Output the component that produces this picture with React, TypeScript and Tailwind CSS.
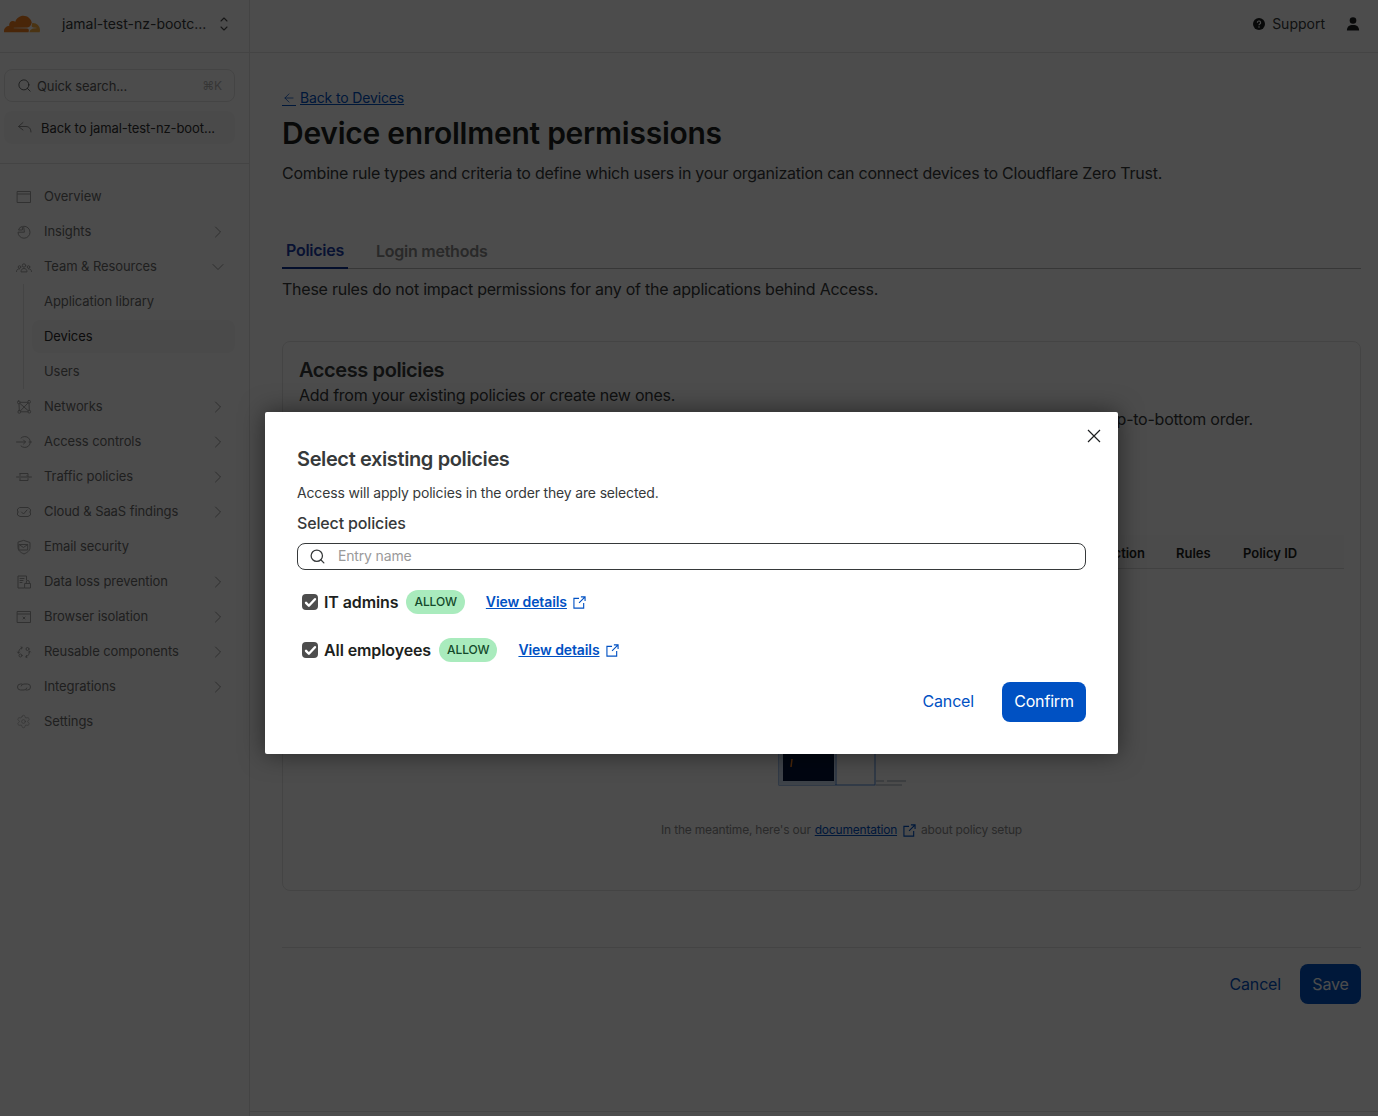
import React from "react";
import { ChevronRight, ChevronDown, Search, ArrowLeft, Settings } from "lucide-react";

const sw = { fill: "none", stroke: "currentColor", strokeWidth: 1, strokeLinecap: "round" as const, strokeLinejoin: "round" as const };
const I = ({ children }: { children: React.ReactNode }) => (
  <svg viewBox="0 0 16 16" width="16" height="16" {...sw}>{children}</svg>
);

const Ext = ({ size, className }: { size: number; className: string }) => (
  <svg viewBox="0 0 14 14" width={size} height={size} fill="none" stroke="currentColor" strokeWidth="1.200" className={className}>
    <path d="M6.500 2.500H1v10.500h10.500V7.500" />
    <path d="M8.500 1H13v4.500M13 1L6.500 7.500" />
  </svg>
);

const icons: Record<string, React.ReactNode> = {
  overview: <I><rect x="1.500" y="2.500" width="13" height="11" /><path d="M1.500 5h13" /></I>,
  insights: <I><path d="M8 2.200a6 6 0 1 1-6 6h6z" /><path d="M6 2.500a4.500 4.500 0 0 0-3.500 3.500H6z" /></I>,
  team: <I><circle cx="8" cy="6.500" r="1.700" /><circle cx="3.500" cy="8" r="1.300" /><circle cx="12.500" cy="8" r="1.300" /><path d="M5 12.500c0-2 1.300-3 3-3s3 1 3 3zM.5 12.500c0-1.600 1-2.700 3-2.700M15.500 12.500c0-1.600-1-2.700-3-2.700" /></I>,
  networks: <I><rect x="1.500" y="2" width="2.600" height="2.600" rx="1" /><rect x="11.800" y="1.500" width="2.600" height="2.600" rx="1" /><rect x="2" y="11.600" width="2.600" height="2.600" rx="1" /><rect x="12" y="11.400" width="2.600" height="2.600" rx="1" /><path d="M4 4.500l8 7M12 4L4.500 11.800M4 3.300h8M3 4.600l.3 7M13 4l.3 7.400M4.600 12.800h7.400" /></I>,
  access: <I><path d="M5 4a5.500 5.500 0 1 1 0 8" /><path d="M.5 8h9M7.500 6l2 2-2 2M13 8h2.500" /></I>,
  traffic: <I><path d="M4 4.500h8v2M4 11.500h8v-2M4 4.500v2M4 9.500v2M.5 8h15M11 6.500l1.500 1.500" /></I>,
  cloud: <I><path d="M4 3.500h8l2.500 2v2l-1 .5 1 .5v2.500l-2.500 1.500H4l-2.500-1.500V8.500l1-.5-1-.5v-2z" /><path d="M5.500 8l2 2 3.500-4" /></I>,
  email: <I><path d="M8 1.500l6 2v5c0 3-2.500 5-6 6.500-3.500-1.500-6-3.500-6-6.500v-5z" /><rect x="3.200" y="5.500" width="8.500" height="5.500" /><path d="M3.200 5.500l4.200 3 4.300-3" /></I>,
  dlp: <I><path d="M10.500 6V2H2v12h6" /><path d="M4 4.500h4M4 6.500h3M4 8.500h2" /><rect x="9" y="9.500" width="5.500" height="4.500" /><path d="M10.300 9.500V8a1.500 1.500 0 0 1 3 0v1.500" /></I>,
  browser: <I><rect x="1.500" y="2.500" width="13" height="11" /><path d="M1.500 5h13M7 8l2 2M9 8l-2 2" /></I>,
  reusable: <I><path d="M6 3.500C3.800 4.500 2.500 6.500 2.500 9M1.500 8l1 1.200 1-1.200M10 13c2.200-1 3.500-3 3.500-5.500M12.500 8l1-1 1 1M5 3l1.200.5L5.500 5M11 13.500L9.800 13l.7-1.500" /><circle cx="11.500" cy="5" r="1.500" /><circle cx="4.500" cy="11.500" r="1.500" /></I>,
  integrations: <I><path d="M6 5H4.500a3 3 0 0 0 0 6H8a3 3 0 0 0 2.800-2" /><path d="M10 11h1.500a3 3 0 0 0 0-6H8a3 3 0 0 0-2.800 2" /></I>,
};

type Row = { label: string; icon: string; chev?: "r" | "d" };
const rows1: Row[] = [
  { label: "Overview", icon: "overview" },
  { label: "Insights", icon: "insights", chev: "r" },
  { label: "Team & Resources", icon: "team", chev: "d" },
];
const rows2: Row[] = [
  { label: "Networks", icon: "networks", chev: "r" },
  { label: "Access controls", icon: "access", chev: "r" },
  { label: "Traffic policies", icon: "traffic", chev: "r" },
  { label: "Cloud & SaaS findings", icon: "cloud", chev: "r" },
  { label: "Email security", icon: "email" },
  { label: "Data loss prevention", icon: "dlp", chev: "r" },
  { label: "Browser isolation", icon: "browser", chev: "r" },
  { label: "Reusable components", icon: "reusable", chev: "r" },
  { label: "Integrations", icon: "integrations", chev: "r" },
  { label: "Settings", icon: "settings" },
];

function NavRow({ r }: { r: Row }) {
  return (
    <div className="flex h-[35px] items-center pl-4 pr-[21px] text-[13px] tracking-[-0.08px] text-[#6a6a6a]">
      <span className="flex w-7 shrink-0 text-[#a3a3a3]">
        {r.icon === "settings" ? <Settings size={15} strokeWidth={1} /> : icons[r.icon]}
      </span>
      <span className="flex-1">{r.label}</span>
      {r.chev === "r" && <ChevronRight size={20} strokeWidth={0.800} className="text-[#6a6a6a]" />}
      {r.chev === "d" && <ChevronDown size={20} strokeWidth={0.800} className="text-[#6a6a6a]" />}
    </div>
  );
}

function Policy({ name, gap }: { name: string; gap: string }) {
  return (
    <div className="flex h-6 items-center pl-[5px]">
      <span className="flex h-4 w-4 items-center justify-center rounded-[4px] bg-[#4d4d4d]">
        <svg viewBox="0 0 16 16" width="13" height="13" fill="none" stroke="#fff" strokeWidth="3" strokeLinecap="round" strokeLinejoin="round">
          <path d="M2.500 8.500l3.500 3.500 7.500-8" />
        </svg>
      </span>
      <span className="ml-[6px] text-base font-semibold tracking-[-0.1px] text-[#1d1f20]">{name}</span>
      <span className="ml-2 flex h-6 items-center rounded-full bg-[#a9ebbd] px-2 text-xs font-medium tracking-[-0.1px] text-[#13492a]">ALLOW</span>
      <a className={`${gap} text-sm font-semibold tracking-[-0.1px] text-[#0051c3] underline`}>View details</a>
      <Ext size={13} className="ml-[6px] text-[#0051c3]" />
    </div>
  );
}

export default function App() {
  return (
    <div className="relative flex h-[1116px] w-[1378px] overflow-hidden bg-white font-['Inter',sans-serif] tracking-[-0.16px] text-[#36393a]">
      <aside className="flex w-[250px] shrink-0 flex-col border-r border-[#e5e5e5]">
        <div className="flex h-[53px] items-center border-b border-[#e5e5e5] pb-[5px] pl-1 pr-[18px]">
          <svg viewBox="0 0 24 24" width="36" height="36" className="shrink-0">
            <path fill="#f38020" d="M16.5088 16.8447c.1475-.5068.0908-.9707-.1553-1.3154-.2246-.3164-.6045-.499-1.0615-.5205l-8.6592-.1123a.1559.1559 0 0 1-.1333-.0713c-.0283-.042-.0351-.0986-.021-.1553.0278-.084.1123-.1484.2036-.1562l8.7359-.1123c1.0351-.0489 2.1601-.8868 2.5537-1.9136l.499-1.3013c.0215-.0561.0293-.1128.0147-.168-.5625-2.5463-2.835-4.4453-5.5499-4.4453-2.5039 0-4.6284 1.6177-5.3876 3.8614-.4927-.3658-1.1187-.5625-1.794-.499-1.2026.119-2.1665 1.083-2.2861 2.2856-.0283.31-.0069.6128.0635.894C1.5683 13.171 0 14.7754 0 16.752c0 .1748.0142.3515.0352.5273.0141.083.0844.1475.1689.1475h15.9814c.0909 0 .1758-.0645.2032-.1553l.12-.4268z" />
            <path fill="#faae40" d="M19.2656 11.2813c-.0771 0-.1611 0-.2383.0112-.0566 0-.1054.0415-.127.0976l-.3378 1.1744c-.1475.5068-.0918.9707.1543 1.3164.2256.3164.6055.498 1.0625.5195l1.8437.1133c.0557 0 .1055.0263.1329.0703.0283.043.0351.1074.0214.1562-.0283.084-.1132.1485-.204.1553l-1.921.1123c-1.041.0488-2.1582.8867-2.5527 1.914l-.1406.3585c-.0283.0713.0215.1416.0986.1416h6.5977c.0771 0 .1474-.0489.169-.126.1122-.4082.1757-.837.1757-1.2803 0-2.6025-2.125-4.727-4.7344-4.727" />
          </svg>
          <span className="ml-[22px] flex-1 whitespace-nowrap text-sm tracking-normal">jamal-test-nz-bootc...</span>
          <svg viewBox="0 0 14 16" width="14" height="16" fill="none" stroke="#4a4a4a" strokeWidth="1.100" strokeLinecap="round" strokeLinejoin="round">
            <path d="M4 5l3-3 3 3M4 11l3 3 3-3" />
          </svg>
        </div>
        <div className="flex h-[111px] flex-col gap-[9px] border-b border-[#e5e5e5] px-[4px] pt-4">
          <div className="flex h-[33px] w-[231px] items-center rounded-lg border border-[#e5e5e5] pl-[12px] pr-[12px] text-[13px] tracking-[-0.12px]">
            <Search size={15} strokeWidth={1.200} className="text-[#36393a]" />
            <span className="ml-[5px] flex-1 pt-[2px] text-[#5c5c5c]">Quick search...</span>
            <span className="text-xs text-[#b5b5b5]">⌘K</span>
          </div>
          <div className="flex h-[33px] w-[231px] items-center rounded-lg bg-[#f9f9f9] pl-[13px] text-[13px] tracking-[-0.08px]">
            <svg viewBox="0 0 16 16" width="16" height="16" fill="none" stroke="#8f8f8f" strokeWidth="1" strokeLinecap="round" strokeLinejoin="round">
              <path d="M6 2.500L1.500 6.500 6 10M1.500 6.500H9c3 0 5 2 5 5.500" />
            </svg>
            <span className="ml-[8px] whitespace-nowrap pt-[2px] text-[#2f2f2f]">Back to jamal-test-nz-boot...</span>
          </div>
        </div>
        <nav className="flex flex-col pt-[15px]">
          {rows1.map((r) => <NavRow key={r.label} r={r} />)}
          <div className="ml-[23px] mr-[14px] flex flex-col border-l border-[#e5e5e5] text-[13px] tracking-[-0.08px] text-[#6a6a6a]">
            <div className="flex h-[35px] items-center pl-5">Application library</div>
            <div className="my-px ml-2 flex h-[33px] items-center rounded-lg bg-[#f8f8f8] pl-3 text-[#2a2a2a]">Devices</div>
            <div className="flex h-[35px] items-center pl-5">Users</div>
          </div>
          {rows2.map((r) => <NavRow key={r.label} r={r} />)}
        </nav>
      </aside>

      <div className="flex min-w-0 flex-1 flex-col">
        <header className="flex h-[53px] shrink-0 items-center justify-end border-b border-[#e5e5e5] pb-[5px] pr-[18px] text-sm tracking-normal">
          <svg viewBox="0 0 16 16" width="12" height="12" className="text-[#1d1f20]">
            <circle cx="8" cy="8" r="8" fill="currentColor" />
            <path d="M5.800 6.200a2.200 2.200 0 1 1 3.300 1.900c-.8.5-1.100.9-1.100 1.600" fill="none" stroke="#fff" strokeWidth="1.500" />
            <circle cx="8" cy="12" r="1" fill="#fff" />
          </svg>
          <span className="ml-[7px]">Support</span>
          <svg viewBox="0 0 16 16" width="14" height="14" className="ml-[21px] text-[#1d1f20]" fill="currentColor">
            <circle cx="8" cy="4" r="3.800" />
            <path d="M1 15.500c0-4.500 2.500-6.500 7-6.500s7 2 7 6.500z" />
          </svg>
        </header>

        <main className="flex flex-1 flex-col pl-8 pr-[17px] pt-[35px]">
          <a className="flex h-5 w-fit items-center text-sm text-[#0051c3] underline">
            <span className="border-b border-[#0051c3]"><ArrowLeft size={14} strokeWidth={1.300} /></span>
            <span className="ml-1 tracking-[-0.14px]">Back to Devices</span>
          </a>
          <h1 className="mt-[5px] text-[30px] font-semibold leading-10 tracking-[-0.25px] text-[#1d1f20]">Device enrollment permissions</h1>
          <p className="mt-2 text-base leading-6 tracking-[-0.24px]">Combine rule types and criteria to define which users in your organization can connect devices to Cloudflare Zero Trust.</p>

          <div className="mt-[47px] flex h-[37px] items-end border-b border-[#b9b9b9] text-base font-semibold tracking-[-0.25px]">
            <div className="-mb-px flex h-[37px] w-[66px] items-start justify-center border-b-2 border-[#0d2f8f] pt-[6px] text-[#1d3fa8]">Policies</div>
            <div className="ml-7 flex h-[37px] items-start pt-2 text-[#8a8a8a]">Login methods</div>
          </div>
          <p className="mt-2 text-base leading-6 tracking-[-0.24px]">These rules do not impact permissions for any of the applications behind Access.</p>

          <section className="mt-10 flex h-[550px] flex-col rounded-lg border border-[#e5e5e5] px-4 pt-[14px]">
            <h2 className="text-xl font-semibold leading-7 tracking-[-0.4px] text-[#36393a]">Access policies</h2>
            <p className="-mt-[1px] text-base leading-6 tracking-[-0.24px]">Add from your existing policies or create new ones.</p>
            <p className="flex justify-end whitespace-nowrap pr-[91px] text-base leading-6 tracking-[-0.24px]">Access will evaluate the policies you add in top-to-bottom order.</p>

            <div className="mt-[104px] grid h-[34px] grid-cols-[1fr_auto_67px_101px] items-center border-b border-[#d9d9d9] bg-[#fafafa] pt-1 text-[13px] font-semibold tracking-normal text-[#1d1f20]">
              <span />
              <span className="pr-[31px]">Action</span>
              <span>Rules</span>
              <span>Policy ID</span>
            </div>

            <div className="mt-[118px] flex flex-col items-center pl-[40px]">
              <svg viewBox="0 0 130 100" width="130" height="100" className="ml-[2px]" fill="none">
                <rect x="1" y="1" width="96" height="97" stroke="#0051c3" strokeOpacity="0.7" />
                <rect x="1" y="1" width="56" height="97" fill="#cfe0f3" />
                <rect x="5" y="1" width="51" height="93" fill="#00153a" />
                <path d="M58 1v97" stroke="#0051c3" strokeOpacity="0.7" />
                <path d="M98 94h8M109 94h19M98 98h26" stroke="#9aa5b5" />
                <path d="M14 72l-1 8" stroke="#f38020" strokeWidth="1.500" />
              </svg>
              <p className="mt-[35px] flex h-4 items-center whitespace-nowrap text-xs tracking-[-0.2px] text-[#8c8c8c]">
                In the meantime, here's our
                <a className="ml-1 text-[#0051c3] underline">documentation</a>
                <Ext size={13} className="ml-[6px] text-[#0051c3]" />
                <span className="ml-[5px]">about policy setup</span>
              </p>
            </div>
          </section>

          <div className="mt-[56px] flex items-center justify-end gap-[19px] border-t border-[#e5e5e5] pt-4">
            <span className="text-base tracking-[-0.16px] text-[#0051c3]">Cancel</span>
            <button className="h-10 w-[61px] rounded-lg bg-[#0051c3] text-base tracking-[-0.16px] text-white">Save</button>
          </div>
          <div className="flex-1" />
        </main>
        <div className="h-[5px] shrink-0 border-t border-[#e5e5e5]" />
      </div>

      <div className="absolute inset-0 bg-black/70" />

      <div className="absolute left-[265px] top-[412px] flex h-[342px] w-[853px] flex-col rounded-[2px] bg-white px-8 pt-[33px] shadow-[0_0_24px_rgba(0,0,0,0.5)]">
        <button className="absolute right-[17px] top-[17px] text-[#1d1f20]">
          <svg viewBox="0 0 14 14" width="14" height="14" fill="none" stroke="currentColor" strokeWidth="1.200">
            <path d="M1 1l12 12M13 1L1 13" />
          </svg>
        </button>
        <h3 className="text-xl font-semibold leading-7 tracking-[-0.38px] text-[#36393a]">Select existing policies</h3>
        <p className="mt-[10px] text-sm leading-5 text-[#36393a]">Access will apply policies in the order they are selected.</p>
        <div className="mt-2 text-base font-medium leading-6 tracking-[-0.15px] text-[#36393a]">Select policies</div>
        <div className="mt-2 flex h-[27px] items-center rounded-lg border border-[#36393a] pl-[11px]">
          <Search size={17} strokeWidth={1.800} className="text-[#36393a]" />
          <span className="ml-[12px] pb-px text-sm text-[#9a9a9a]">Entry name</span>
        </div>
        <div className="mt-5"><Policy name="IT admins" gap="ml-[21px]" /></div>
        <div className="mt-6"><Policy name="All employees" gap="ml-[21px]" /></div>
        <div className="mt-5 flex items-center justify-end gap-7">
          <span className="pb-[2px] text-base tracking-[-0.16px] text-[#0051c3]">Cancel</span>
          <button className="h-10 w-[84px] rounded-lg bg-[#0051c3] pb-[2px] text-base tracking-[-0.16px] text-white">Confirm</button>
        </div>
      </div>
    </div>
  );
}
